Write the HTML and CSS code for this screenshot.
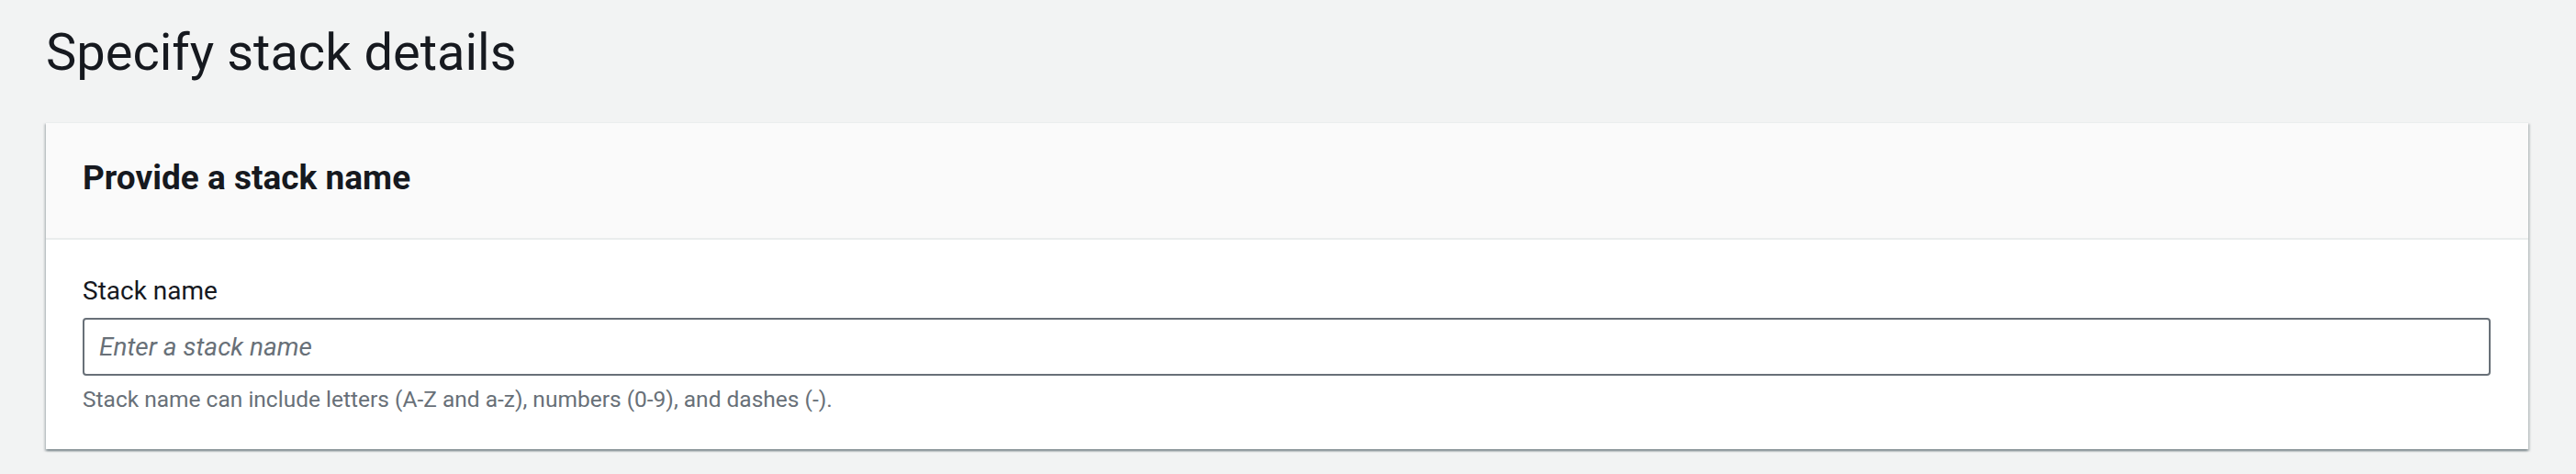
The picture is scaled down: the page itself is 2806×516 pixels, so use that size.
FILE: index.html
```html
<!DOCTYPE html>
<html lang="en">
<head>
<meta charset="utf-8">
<title>Specify stack details</title>
<link rel="stylesheet" href="styles.css">
</head>
<body>
<main class="page">
  <h1 class="page-title">Specify stack details</h1>
  <section class="container">
    <header class="container-header">
      <h2 class="container-title">Provide a stack name</h2>
    </header>
    <div class="container-body">
      <div class="form-field">
        <label class="field-label" for="stack-name">Stack name</label>
        <input class="field-input" id="stack-name" type="text" placeholder="Enter a stack name">
        <p class="field-help">Stack name can include letters (A-Z and a-z), numbers (0-9), and dashes (-).</p>
      </div>
    </div>
  </section>
</main>
</body>
</html>
```
FILE: styles.css
```css
html, body {
  margin: 0;
  padding: 0;
  background: #f2f3f3;
}
body {
  font-family: Roboto, "Liberation Sans", Arial, sans-serif;
  color: #16191f;
}
.page {
  padding: 0 52px 40px 50px;
}
.page-title {
  margin: 0 0 40px;
  padding-top: 21px;
  font-size: 56px;
  line-height: 72px;
  font-weight: 400;
  color: #16191f;
}
.container {
  background: #ffffff;
  border-top: 1px solid #eaeded;
  box-shadow: 0 2px 2px 0 rgba(0, 28, 36, 0.3), 2px 2px 2px 0 rgba(0, 28, 36, 0.15), -2px 2px 2px 0 rgba(0, 28, 36, 0.15);
}
.container-header {
  background: #fafafa;
  border-bottom: 2px solid #eaeded;
  padding: 38px 40px 43px;
}
.container-title {
  margin: 0;
  font-size: 37px;
  line-height: 44px;
  font-weight: 700;
  color: #16191f;
}
.container-body {
  padding: 36px 41px 38px 40px;
}
.form-field {
  display: flex;
  flex-direction: column;
}
.field-label {
  font-size: 28px;
  line-height: 40px;
  color: #16191f;
  margin-bottom: 9px;
}
.field-input {
  box-sizing: border-box;
  height: 63px;
  width: 100%;
  margin: 0;
  padding: 0 16px;
  border: 2px solid #687078;
  border-radius: 4px;
  background: #ffffff;
  font-family: Roboto, "Liberation Sans", Arial, sans-serif;
  font-size: 28px;
  color: #16191f;
  outline: none;
}
.field-input::placeholder {
  color: #687078;
  font-style: italic;
  opacity: 1;
}
.field-help {
  margin: 10px 0 0;
  font-size: 24.5px;
  line-height: 32px;
  color: #687078;
}
```
